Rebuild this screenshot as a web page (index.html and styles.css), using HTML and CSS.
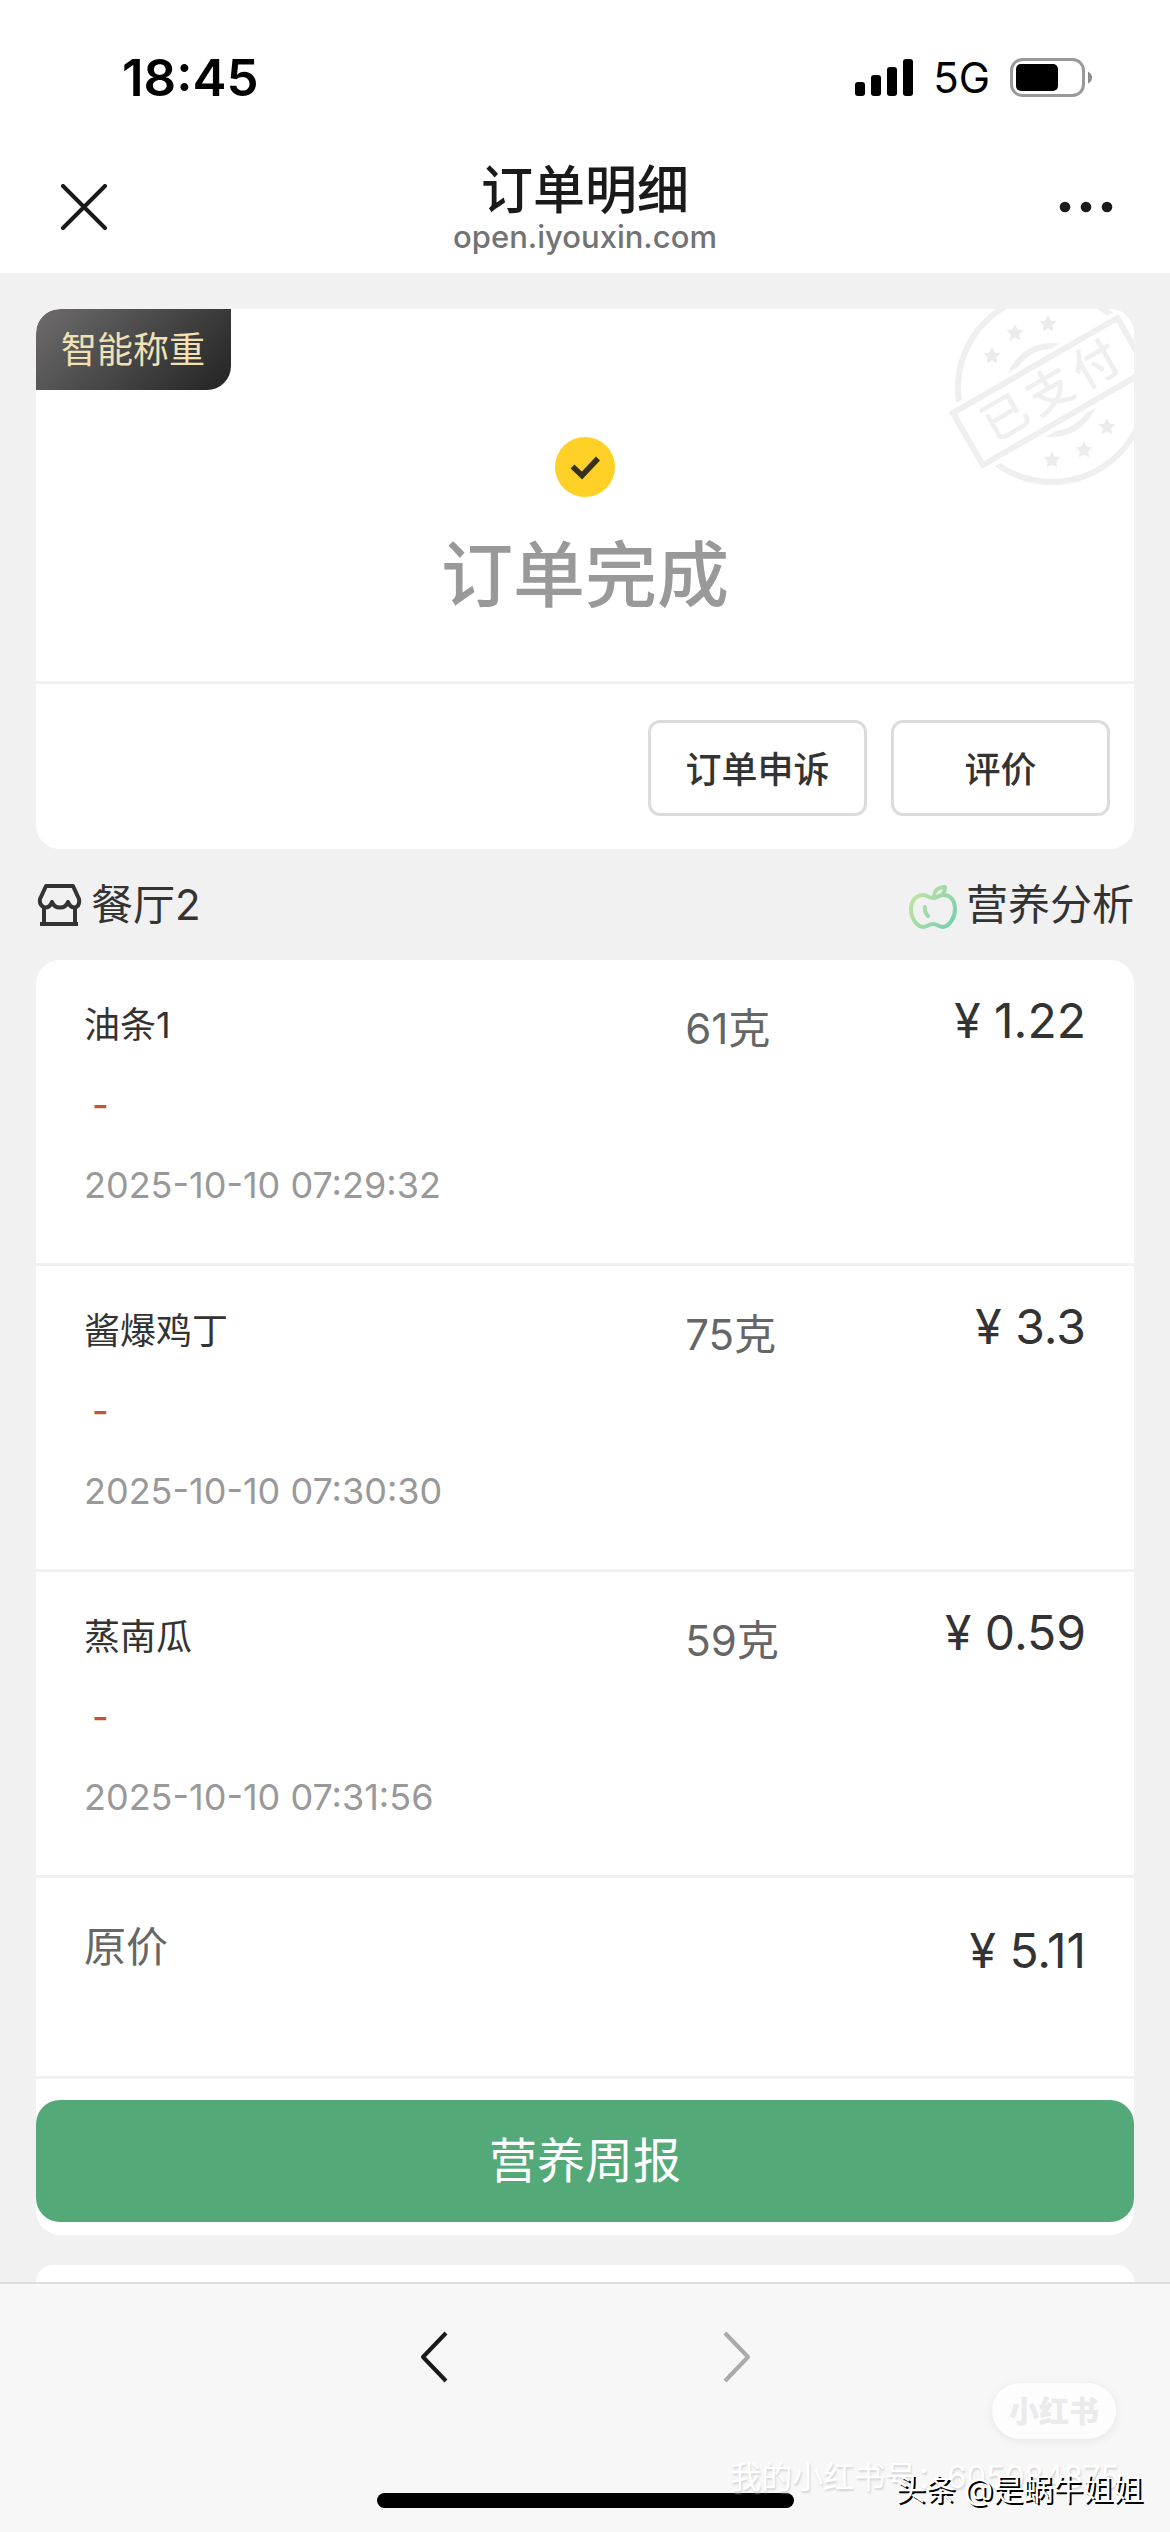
FILE: index.html
```html
<!DOCTYPE html>
<html lang="zh-CN">
<head>
<meta charset="utf-8">
<meta name="viewport" content="width=device-width, initial-scale=1">
<title>订单明细</title>
<link rel="stylesheet" href="styles.css">
</head>
<body>
<header class="top">
  <div class="status">
    <span class="clock">18:45</span>
    <div class="signals">
      <svg width="58" height="38" viewBox="0 0 58 38" aria-hidden="true">
        <rect x="0" y="23" width="10" height="14" rx="3"/><rect x="16" y="16" width="10" height="21" rx="3"/><rect x="32" y="8" width="10" height="29" rx="3"/><rect x="48" y="0" width="10" height="37" rx="3"/>
      </svg>
      <span class="network">5G</span>
      <svg width="82" height="40" viewBox="0 0 82 40" aria-hidden="true">
        <rect x="1.5" y="1.5" width="72" height="36" rx="11" fill="none" stroke="#999" stroke-width="3"/>
        <rect x="6" y="6" width="42" height="27" rx="5"/>
        <path d="M78 13.500q4 2 4 6t-4 6z" fill="#8c8c8c"/>
      </svg>
    </div>
  </div>
  <div class="navbar">
    <button class="icon-button" aria-label="关闭">
      <svg width="54" height="46" viewBox="0 0 54 46"><path d="M6 2l42 42M48 2L6 44" fill="none" stroke="#1a1a1a" stroke-width="4" stroke-linecap="round"/></svg>
    </button>
    <div class="heading">
      <h1 class="title">订单明细</h1>
      <span class="host">open.iyouxin.com</span>
    </div>
    <button class="icon-button" aria-label="更多">
      <svg width="54" height="12" viewBox="0 0 54 12" fill="#1a1a1a"><circle cx="6" cy="6" r="5.300"/><circle cx="27" cy="6" r="5.300"/><circle cx="48" cy="6" r="5.300"/></svg>
    </button>
  </div>
</header>

<main class="page">
  <section class="card summary">
    <span class="badge">智能称重</span>
    <svg class="stamp" width="200" height="200" viewBox="0 0 200 200" role="img" aria-label="已支付">
      <defs><path id="star" d="M0-9l2.600 5.400 6 .8-4.400 4.200 1.100 6L0 4.600l-5.300 2.800 1.100-6-4.400-4.200 6-.8z"/></defs>
      <g fill="none" stroke="#efefef">
        <circle cx="112" cy="98" r="94" stroke-width="6"/>
        <circle cx="112" cy="100" r="44" stroke-width="6"/>
      </g>
      <g fill="#ececec">
        <use href="#star" x="52" y="66"/><use href="#star" x="75" y="43"/><use href="#star" x="108" y="34"/>
        <use href="#star" x="167" y="137"/><use href="#star" x="144" y="160"/><use href="#star" x="112" y="170"/>
      </g>
      <g transform="rotate(-30 111 101)">
        <rect x="9" y="64" width="204" height="74" fill="#fff"/>
        <rect x="15" y="71" width="190" height="60" fill="#fff" stroke="#efefef" stroke-width="6"/>
        <g class="stamp-text"><text x="58" y="117">已</text><text x="110" y="117">支</text><text x="163" y="117">付</text></g>
      </g>
    </svg>
    <div class="state">
      <svg width="60" height="60" viewBox="0 0 60 60" aria-hidden="true"><circle cx="30" cy="30" r="30" fill="#ffd026"/><path d="M17.500 29.500l9.500 9 16-17" fill="none" stroke="#37301c" stroke-width="5.500"/></svg>
      <h2 class="state-text">订单完成</h2>
    </div>
    <div class="actions">
      <button class="outline-button">订单申诉</button>
      <button class="outline-button">评价</button>
    </div>
  </section>

  <div class="section-head">
    <span class="place">
      <svg width="46" height="44" viewBox="0 0 46 44" fill="none" stroke="#333" stroke-width="4" stroke-linejoin="round" aria-hidden="true"><path d="M10 3h27l6 13q1 7-4 8.500-5 0-7-5.500-2 5.500-8 5.500T16 19q-2 5.500-7 5.500-6-2-5-8.500zM8 24v17M39 24v17M4 41h38"/></svg>
      <span>餐厅2</span>
    </span>
    <a class="nutrition" href="#">
      <svg width="48" height="48" viewBox="0 0 48 48" fill="none" stroke="url(#leaf)" stroke-width="4" stroke-linecap="round" stroke-linejoin="round" aria-hidden="true">
        <defs><linearGradient id="leaf" gradientUnits="userSpaceOnUse" x1="3" y1="10" x2="46" y2="44"><stop offset="0" stop-color="#c4e4a0"/><stop offset="1" stop-color="#76ceb2"/></linearGradient></defs>
        <path d="M24 17c-4 0-6-3-10-3C7 14 2 20 2 28c0 9 5 17 12 18 4 0 6-3 10-3s6 3 10 3c7-1 12-10 12-18 0-9-5-14-11-14-5 0-7 3-11 3zM25 16c0-6 4-10 11-10 0 5-2 8-6 9M16 26q-1 5 3 9"/>
      </svg>
      <span>营养分析</span>
    </a>
  </div>

  <section class="card">
    <ul class="items">
      <li class="item">
        <div class="detail"><span class="name">油条1</span><span class="note">-</span><time class="time">2025-10-10 07:29:32</time></div>
        <span class="weight">61克</span><span class="price">¥ 1.22</span>
      </li>
      <li class="item">
        <div class="detail"><span class="name">酱爆鸡丁</span><span class="note">-</span><time class="time">2025-10-10 07:30:30</time></div>
        <span class="weight">75克</span><span class="price">¥ 3.3</span>
      </li>
      <li class="item">
        <div class="detail"><span class="name">蒸南瓜</span><span class="note">-</span><time class="time">2025-10-10 07:31:56</time></div>
        <span class="weight">59克</span><span class="price">¥ 0.59</span>
      </li>
    </ul>
    <div class="total"><span class="total-label">原价</span><span class="total-price">¥ 5.11</span></div>
    <div class="report"><button class="report-button">营养周报</button></div>
  </section>

  <section class="card next-card"></section>
</main>

<footer class="bottom">
  <nav class="history">
    <button class="icon-button" aria-label="后退"><svg width="30" height="54" viewBox="0 0 30 54"><path d="M27 3L4 27l23 24" fill="none" stroke="#1a1a1a" stroke-width="4" stroke-linejoin="round"/></svg></button>
    <button class="icon-button" aria-label="前进" disabled><svg width="30" height="54" viewBox="0 0 30 54"><path d="M3 3l23 24L3 51" fill="none" stroke="#aaa" stroke-width="4" stroke-linejoin="round"/></svg></button>
  </nav>
  <div class="home-indicator"></div>
  <span class="pill-mark">小红书</span>
  <span class="account-mark">我的小红书号：605084875</span>
  <span class="author-mark">头条 @是蜗牛姐姐</span>
</footer>
</body>
</html>
```
FILE: styles.css
```css
* { box-sizing: border-box; }

body {
  margin: 0;
  min-height: 100vh;
  display: flex;
  flex-direction: column;
  background: #f1f1f1;
  color: #333;
  font-family: Inter, "Noto Sans CJK SC", sans-serif;
  font-size: 36px;
  line-height: 50px;
}

h1, h2, ul { margin: 0; padding: 0; }
ul { list-style: none; }
svg { display: block; flex: none; }
button { font: inherit; color: inherit; cursor: pointer; }
a { color: inherit; text-decoration: none; }

.top { background: #fff; color: #000; }

.status {
  display: flex;
  justify-content: space-between;
  align-items: center;
  height: 156px;
  padding: 0 78px 0 122px;
}
.clock { font-size: 51px; font-weight: 600; }
.signals { display: flex; align-items: center; gap: 20px; }
.network { font-size: 42px; }

.navbar {
  display: grid;
  grid-template-columns: 1fr auto 1fr;
  align-items: center;
  height: 117px;
  padding: 0 57px 16px;
}
.navbar .icon-button:last-child { justify-self: end; }
.icon-button {
  justify-self: start;
  padding: 0;
  border: 0;
  background: none;
}
.heading { display: flex; flex-direction: column; align-items: center; color: #1a1a1a; }
.title { font-size: 52px; font-weight: 500; line-height: 60px; }
.host { font-size: 31px; line-height: 32px; font-weight: 500; color: #737373; }

.page {
  flex: 1;
  display: flex;
  flex-direction: column;
  padding: 36px 36px 0;
}
.card { background: #fff; border-radius: 24px; }

.summary { position: relative; overflow: hidden; }
.badge {
  position: absolute;
  top: 0;
  left: 0;
  padding: 16px 26px 15px 25px;
  border-radius: 24px 0;
  background: linear-gradient(135deg, #6e6c6d, #232323);
  color: #f2e1b5;
}
.stamp { position: absolute; top: -19px; right: -6px; }
.stamp-text { fill: #efefef; font-size: 46px; font-weight: 500; text-anchor: middle; }
.state {
  display: flex;
  flex-direction: column;
  align-items: center;
  gap: 28px;
  padding: 128px 0 56px;
  border-bottom: 3px solid #f1f1f1;
}
.state-text { font-size: 72px; line-height: 100px; font-weight: 500; color: #999; }
.actions {
  display: flex;
  justify-content: flex-end;
  gap: 24px;
  padding: 36px 24px 33px;
}
.outline-button {
  width: 219px;
  height: 96px;
  padding: 3px 0 0;
  border: 3px solid #dcdcdc;
  border-radius: 12px;
  background: #fff;
  font-weight: 500;
}

.section-head {
  display: flex;
  justify-content: space-between;
  align-items: center;
  height: 111px;
  font-size: 42px;
}
.place, .nutrition { display: flex; align-items: center; gap: 9px; }

.item {
  display: grid;
  grid-template-columns: 6fr 2fr 2fr;
  align-items: start;
  padding: 40px 48px 53px;
  border-bottom: 3px solid #f1f1f1;
}
.detail { display: flex; flex-direction: column; gap: 30px; }
.note { padding-left: 8px; font-weight: 500; color: #c0563a; }
.time { color: #999; }
.weight { font-size: 42px; line-height: 58px; color: #666; }
.price { font-size: 48px; line-height: 42px; text-align: right; }

.total {
  display: flex;
  justify-content: space-between;
  align-items: flex-start;
  padding: 44px 48px 96px;
  border-bottom: 3px solid #f1f1f1;
}
.total-label { font-size: 42px; color: #666; }
.total-price { font-size: 48px; line-height: 58px; }

.report { padding: 21px 0 13px; }
.report-button {
  width: 100%;
  height: 122px;
  border: 0;
  border-radius: 24px;
  background: #53aa78;
  color: #fff;
  font-size: 48px;
}
.next-card { flex: 1; min-height: 17px; margin-top: 30px; border-radius: 24px 24px 0 0; }

.bottom {
  position: relative;
  display: flex;
  flex-direction: column;
  align-items: center;
  justify-content: space-between;
  height: 250px;
  padding: 46px 0 24px;
  border-top: 2px solid #dedede;
  background: #f7f7f7;
}
.history { display: flex; gap: 273px; }
.home-indicator { width: 417px; height: 15px; border-radius: 8px; background: #000; }

.pill-mark, .account-mark, .author-mark { position: absolute; white-space: nowrap; }
.pill-mark {
  right: 54px;
  bottom: 93px;
  padding: 3px 17px;
  border-radius: 28px;
  background: #fdfdfd;
  box-shadow: 0 2px 10px #e6e6e6;
  color: #ebebeb;
  font-size: 30px;
  font-weight: 900;
}
.account-mark {
  right: 51px;
  bottom: 30px;
  color: #fff;
  font-size: 31px;
  text-shadow: 1px 2px 2px #d4d4d4;
}
.author-mark {
  right: 27px;
  bottom: 18px;
  color: #fff;
  font-size: 30px;
  text-shadow: 2px 2px 0 #000;
}
```
